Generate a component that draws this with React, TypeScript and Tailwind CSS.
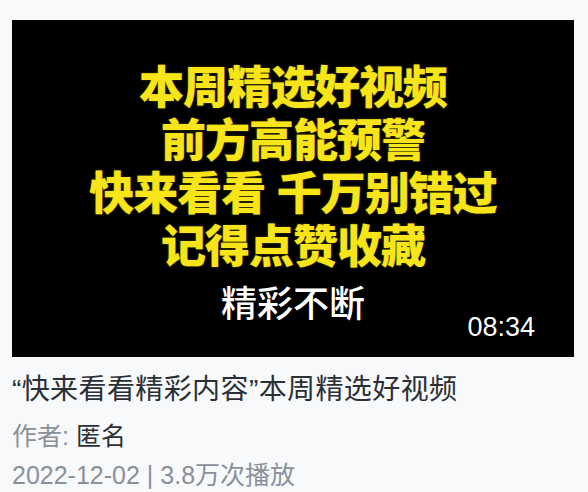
// 视频卡片：封面 + 时长 + 标题 + 作者 + 日期/播放量
const cover = {
  lines: ["本周精选好视频", "前方高能预警", "快来看看 千万别错过", "记得点赞收藏"],
  sub: "精彩不断",
  duration: "08:34",
}

const video = {
  title: "“快来看看精彩内容”本周精选好视频",
  author: "匿名",
  date: "2022-12-02",
  plays: "3.8万次播放",
}

export default function App() {
  return (
    <div
      className="min-h-screen w-full bg-[#f8f9fa] px-3 pt-5"
      style={{ fontFamily: '"Liberation Sans", "Noto Sans CJK SC", sans-serif' }}
    >
      {/* cover */}
      <div className="relative flex h-[337px] w-[562px] flex-col items-center bg-black pt-[46px]">
        <div className="flex flex-col items-center gap-[7px] font-black leading-[46px] text-[#f7e51a] text-[45px] [text-shadow:0_0_2px_#6b5f00]">
          {cover.lines.map((l) => (
            <div key={l} className="whitespace-pre tracking-[-1px]">
              {l}
            </div>
          ))}
        </div>
        <div className="mt-[12px] text-[36px] font-medium leading-[44px] text-white">
          {cover.sub}
        </div>

        <div className="absolute bottom-[16px] right-[39px] text-[27px] leading-none text-white">
          {cover.duration}
        </div>
      </div>

      {/* info */}
      <div className="mt-[17px] text-[28px] leading-[32px] tracking-[0.4px] text-[#2b2f36]">
        {video.title}
      </div>
      <div className="mt-[14px] text-[25px] leading-[32px]">
        <span className="text-[#8a9099]">作者: </span>
        <span className="text-[#2b2f36]">{video.author}</span>
      </div>
      <div className="mt-[7px] text-[25px] leading-[32px] text-[#8a9099]">
        {video.date} | {video.plays}
      </div>
    </div>
  )
}
